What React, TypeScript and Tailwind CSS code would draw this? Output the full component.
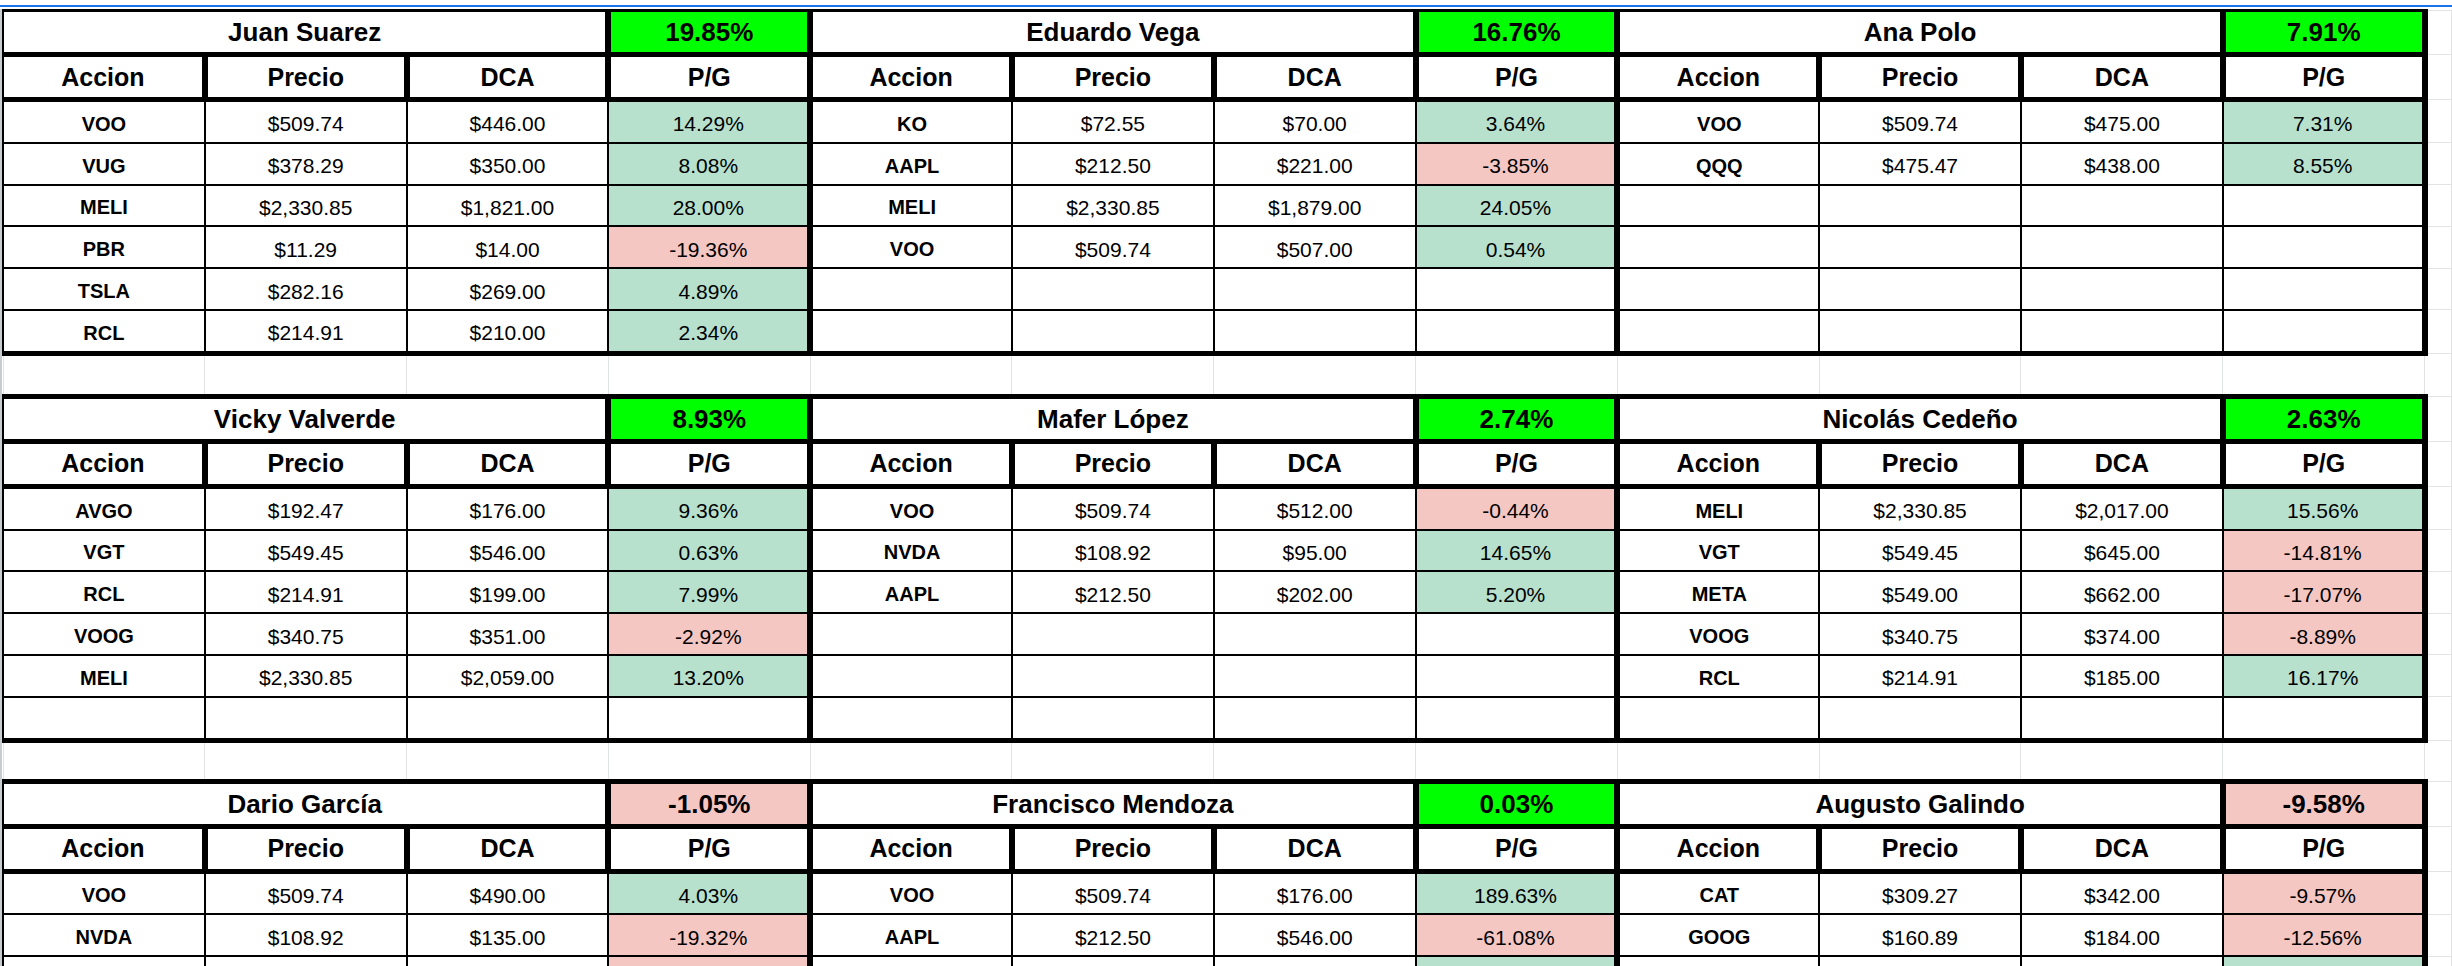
import { Fragment } from "react";

interface Row {
  t: string;
  p: string;
  d: string;
  g: string;
  fill?: "pos" | "neg";
}

interface Sheet {
  name: string;
  total: string;
  rows: Row[];
}

const e = (fill?: "pos" | "neg"): Row => ({ t: "", p: "", d: "", g: "", fill });

const blocks: Sheet[][] = [
  [
    {
      name: "Juan Suarez",
      total: "19.85%",
      rows: [
        { t: "VOO", p: "$509.74", d: "$446.00", g: "14.29%" },
        { t: "VUG", p: "$378.29", d: "$350.00", g: "8.08%" },
        { t: "MELI", p: "$2,330.85", d: "$1,821.00", g: "28.00%" },
        { t: "PBR", p: "$11.29", d: "$14.00", g: "-19.36%" },
        { t: "TSLA", p: "$282.16", d: "$269.00", g: "4.89%" },
        { t: "RCL", p: "$214.91", d: "$210.00", g: "2.34%" },
      ],
    },
    {
      name: "Eduardo Vega",
      total: "16.76%",
      rows: [
        { t: "KO", p: "$72.55", d: "$70.00", g: "3.64%" },
        { t: "AAPL", p: "$212.50", d: "$221.00", g: "-3.85%" },
        { t: "MELI", p: "$2,330.85", d: "$1,879.00", g: "24.05%" },
        { t: "VOO", p: "$509.74", d: "$507.00", g: "0.54%" },
        e(),
        e(),
      ],
    },
    {
      name: "Ana Polo",
      total: "7.91%",
      rows: [
        { t: "VOO", p: "$509.74", d: "$475.00", g: "7.31%" },
        { t: "QQQ", p: "$475.47", d: "$438.00", g: "8.55%" },
        e(),
        e(),
        e(),
        e(),
      ],
    },
  ],
  [
    {
      name: "Vicky Valverde",
      total: "8.93%",
      rows: [
        { t: "AVGO", p: "$192.47", d: "$176.00", g: "9.36%" },
        { t: "VGT", p: "$549.45", d: "$546.00", g: "0.63%" },
        { t: "RCL", p: "$214.91", d: "$199.00", g: "7.99%" },
        { t: "VOOG", p: "$340.75", d: "$351.00", g: "-2.92%" },
        { t: "MELI", p: "$2,330.85", d: "$2,059.00", g: "13.20%" },
        e(),
      ],
    },
    {
      name: "Mafer López",
      total: "2.74%",
      rows: [
        { t: "VOO", p: "$509.74", d: "$512.00", g: "-0.44%" },
        { t: "NVDA", p: "$108.92", d: "$95.00", g: "14.65%" },
        { t: "AAPL", p: "$212.50", d: "$202.00", g: "5.20%" },
        e(),
        e(),
        e(),
      ],
    },
    {
      name: "Nicolás Cedeño",
      total: "2.63%",
      rows: [
        { t: "MELI", p: "$2,330.85", d: "$2,017.00", g: "15.56%" },
        { t: "VGT", p: "$549.45", d: "$645.00", g: "-14.81%" },
        { t: "META", p: "$549.00", d: "$662.00", g: "-17.07%" },
        { t: "VOOG", p: "$340.75", d: "$374.00", g: "-8.89%" },
        { t: "RCL", p: "$214.91", d: "$185.00", g: "16.17%" },
        e(),
      ],
    },
  ],
  [
    {
      name: "Dario García",
      total: "-1.05%",
      rows: [
        { t: "VOO", p: "$509.74", d: "$490.00", g: "4.03%" },
        { t: "NVDA", p: "$108.92", d: "$135.00", g: "-19.32%" },
        e("neg"),
        e(),
        e(),
        e(),
      ],
    },
    {
      name: "Francisco Mendoza",
      total: "0.03%",
      rows: [
        { t: "VOO", p: "$509.74", d: "$176.00", g: "189.63%" },
        { t: "AAPL", p: "$212.50", d: "$546.00", g: "-61.08%" },
        e("pos"),
        e(),
        e(),
        e(),
      ],
    },
    {
      name: "Augusto Galindo",
      total: "-9.58%",
      rows: [
        { t: "CAT", p: "$309.27", d: "$342.00", g: "-9.57%" },
        { t: "GOOG", p: "$160.89", d: "$184.00", g: "-12.56%" },
        e("pos"),
        e(),
        e(),
        e(),
      ],
    },
  ],
];

const pgFill = (r: Row) => {
  const kind = r.fill ?? (r.g === "" ? undefined : r.g.startsWith("-") ? "neg" : "pos");
  if (kind === "pos") return "bg-[#b7e1cd]";
  if (kind === "neg") return "bg-[#f4c7c3]";
  return "bg-white";
};

const extraCell = "p-0 border border-[#e2e3e3]";

export default function App() {
  return (
    <div className="w-[2452px] h-[966px] overflow-hidden bg-white text-black font-['Liberation_Sans',Arial,sans-serif]">
      <div className="h-[5px]" />
      <div className="h-[2px] bg-[#1a73e8]" />
      <div className="h-[2px]" />
      <div className="flex">
        <div className="w-[2px] shrink-0 bg-[#c7ccd1]" />
        <table className="table-fixed border-collapse w-[2450px]">
          <colgroup>
            {Array.from({ length: 12 }).map((_, i) => (
              <col key={i} className="w-[201.8px]" />
            ))}
            <col />
          </colgroup>
          <tbody>
            {blocks.map((blk, bi) => (
              <Fragment key={bi}>
                {bi > 0 && (
                  <tr>
                    {Array.from({ length: 12 }).map((_, i) => (
                      <td key={i} className="p-0 border-x border-[#e2e3e3]">
                        <div className={bi === 1 ? "h-[38px]" : "h-[36px]"} />
                      </td>
                    ))}
                    <td className={extraCell} />
                  </tr>
                )}

                {/* nombre + total */}
                <tr>
                  {blk.map((s, si) => (
                    <Fragment key={si}>
                      <td
                        colSpan={3}
                        className={`p-0 border-solid border-black border-r-[6px] border-b-[5px] ${
                          bi === 0 ? "border-t-[3px]" : "border-t-[5px]"
                        } ${si === 0 ? "border-l-2" : "border-l-[6px]"}`}
                      >
                        <div className="h-[40px] flex items-center justify-center text-[26px] font-bold leading-none">
                          {s.name}
                        </div>
                      </td>
                      <td
                        className={`p-0 border-solid border-black border-x-[6px] border-b-[5px] ${
                          bi === 0 ? "border-t-[3px]" : "border-t-[5px]"
                        } ${s.total.startsWith("-") ? "bg-[#f4c7c3]" : "bg-[#00ff00]"}`}
                      >
                        <div className="h-[40px] flex items-center justify-center text-[26px] font-bold leading-none">
                          {s.total}
                        </div>
                      </td>
                    </Fragment>
                  ))}
                  <td className={extraCell} />
                </tr>

                {/* encabezados */}
                <tr>
                  {blk.map((s, si) =>
                    ["Accion", "Precio", "DCA", "P/G"].map((h, hi) => (
                      <td
                        key={`${si}-${hi}`}
                        className={`p-0 border-solid border-black border-y-[5px] border-r-[6px] ${
                          si === 0 && hi === 0 ? "border-l-2" : "border-l-[6px]"
                        }`}
                      >
                        <div className="h-[40px] flex items-center justify-center text-[25px] font-bold leading-none">
                          {h}
                        </div>
                      </td>
                    ))
                  )}
                  <td className={extraCell} />
                </tr>

                {/* filas */}
                {[0, 1, 2, 3, 4, 5].map((ri) => (
                  <tr key={ri}>
                    {blk.map((s, si) => {
                      const r = s.rows[ri];
                      const top = ri === 0 ? "border-t-[5px]" : "border-t-2";
                      const bottom = ri === 5 ? "border-b-[5px]" : "border-b-2";
                      const cells = [r.t, r.p, r.d, r.g];
                      return cells.map((v, ci) => {
                        const left =
                          ci === 0 ? (si === 0 ? "border-l-2" : "border-l-[6px]") : "border-l-2";
                        const right = ci === 3 ? "border-r-[6px]" : "border-r-2";
                        const bg = ci === 3 ? pgFill(r) : "bg-white";
                        return (
                          <td
                            key={`${si}-${ci}`}
                            className={`p-0 border-solid border-black ${top} ${bottom} ${left} ${right} ${bg}`}
                          >
                            <div
                              className={`h-[39.8px] pt-[4px] flex items-center justify-center leading-none ${
                                ci === 0 ? "text-[20px] font-bold" : "text-[21px]"
                              }`}
                            >
                              {v}
                            </div>
                          </td>
                        );
                      });
                    })}
                    <td className={extraCell} />
                  </tr>
                ))}
              </Fragment>
            ))}
          </tbody>
        </table>
      </div>
    </div>
  );
}
